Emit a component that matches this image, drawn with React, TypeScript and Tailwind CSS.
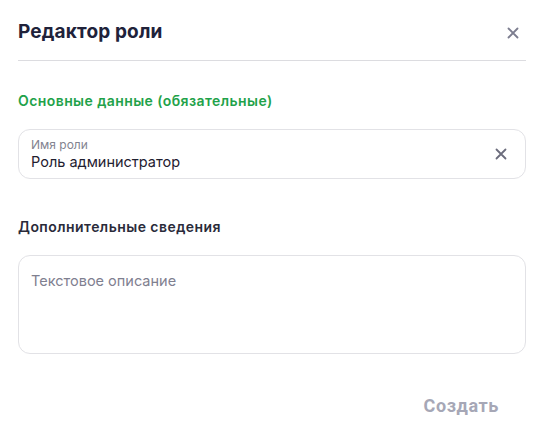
import React from "react";

function XIcon({ className }: { className?: string }) {
  return (
    <svg viewBox="0 0 12 12" className={className} fill="none" stroke="currentColor" strokeWidth="1.8" strokeLinecap="round">
      <path d="M1.5 1.5 L10.5 10.5 M10.5 1.5 L1.5 10.5" />
    </svg>
  );
}

export default function App() {
  return (
    <div className="w-[544px] h-[445px] bg-white px-[18px] flex flex-col" style={{ fontFamily: "Inter, 'Noto Sans', sans-serif" }}>
      <div className="flex items-center justify-between h-[61px] border-b border-[#dcdce0] pt-[5px]">
        <h1 className="text-[19px] font-bold text-[#20223a] tracking-[0.15px]">Редактор роли</h1>
        <button className="w-[12px] h-[12px] mr-[7px] text-[#7c7d8f]">
          <XIcon className="w-[12px] h-[12px]" />
        </button>
      </div>
      <div className="mt-[30px] text-[14px] font-semibold text-[#1fa24a] leading-[20px] tracking-[0.42px]">Основные данные (обязательные)</div>
      <div className="mt-[18px] h-[50px] rounded-[12px] border border-[#e2e2e6] flex items-center pl-[12px] pr-[18px]">
        <div className="flex-1 flex flex-col">
          <span className="text-[12px] leading-[15px] text-[#82838f]">Имя роли</span>
          <span className="text-[14.5px] leading-[19px] text-[#1f2030]">Роль администратор</span>
        </div>
        <XIcon className="w-[12px] h-[12px] text-[#6b6c7c]" />
      </div>
      <div className="mt-[38px] text-[14px] font-semibold text-[#2a2b3a] leading-[20px] tracking-[0.45px]">Дополнительные сведения</div>
      <div className="mt-[18px] h-[99px] rounded-[12px] border border-[#e2e2e6] pl-[12px] pt-[12px]">
        <span className="text-[14.5px] leading-[19px] text-[#7f8090]">Текстовое описание</span>
      </div>
      <div className="flex justify-end mt-[38px] pr-[27px]">
        <button className="text-[18px] font-bold text-[#a6a7b6] tracking-[0.6px]" style={{ fontFamily: "Roboto, 'Liberation Sans', sans-serif" }}>Создать</button>
      </div>
    </div>
  );
}
